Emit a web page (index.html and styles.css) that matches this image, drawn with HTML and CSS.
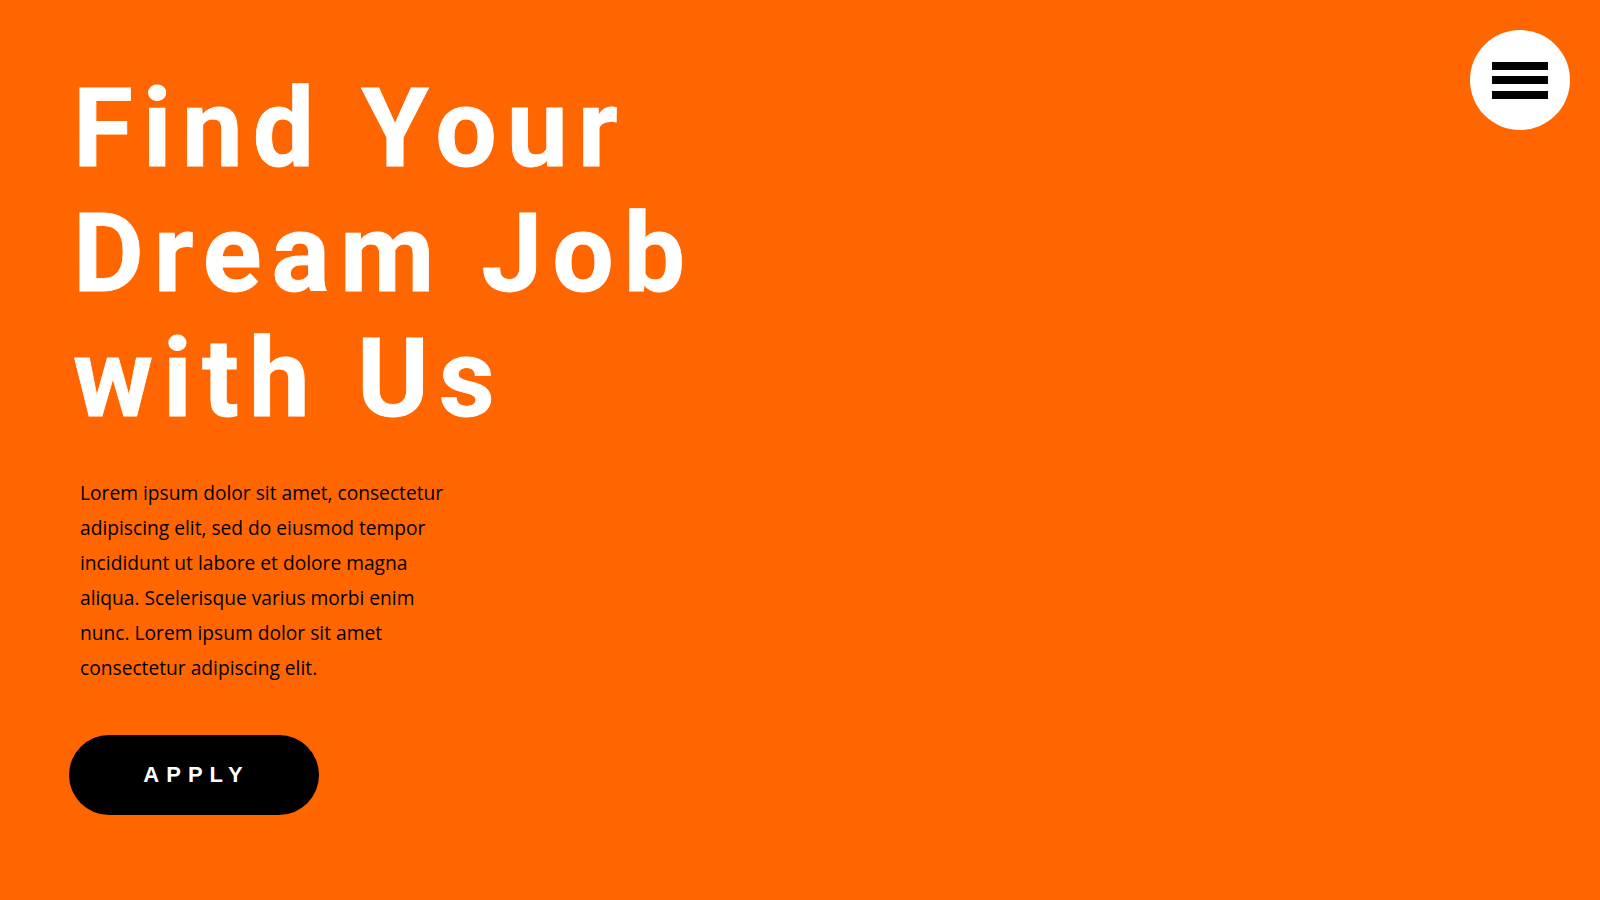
FILE: index.html
```html
<!DOCTYPE html>
<html lang="en">
<head>
<meta charset="utf-8">
<title>Find Your Dream Job</title>
<link rel="stylesheet" href="styles.css">
</head>
<body>
<main class="hero">
  <h1 class="hero-title">Find Your<br>Dream Job<br>with Us</h1>
  <p class="hero-text">Lorem ipsum dolor sit amet, consectetur adipiscing elit, sed do eiusmod tempor incididunt ut labore et dolore magna aliqua. Scelerisque varius morbi enim nunc. Lorem ipsum dolor sit amet consectetur adipiscing elit.</p>
  <a class="apply-btn" href="#">APPLY</a>
</main>
<button class="menu-btn" aria-label="Menu">
  <span class="menu-bar"></span>
  <span class="menu-bar"></span>
  <span class="menu-bar"></span>
</button>
</body>
</html>
```
FILE: styles.css
```css
html, body {
  margin: 0;
  padding: 0;
  height: 100%;
}
body {
  background: #ff6600;
  font-family: "Open Sans", sans-serif;
  overflow: hidden;
}
.hero {
  display: flex;
  flex-direction: column;
  align-items: flex-start;
  padding: 67px 0 0 68px;
}
.hero-title {
  margin: 0 0 0 5px;
  font-family: "Roboto", sans-serif;
  font-weight: 700;
  font-size: 109px;
  line-height: 125px;
  letter-spacing: 10px;
  color: #ffffff;
  -webkit-text-stroke: 0.8px #ffffff;
}
.hero-text {
  margin: 33px 0 0 12px;
  width: 380px;
  font-size: 19.2px;
  line-height: 35px;
  color: #000000;
}
.apply-btn {
  margin: 50px 0 0 1px;
  display: flex;
  align-items: center;
  justify-content: center;
  width: 250px;
  height: 80px;
  border-radius: 40px;
  background: #000000;
  color: #ffffff;
  text-decoration: none;
  font-family: "Liberation Sans", sans-serif;
  font-weight: 700;
  font-size: 22px;
  letter-spacing: 7px;
  padding-left: 5px;
  box-sizing: border-box;
}
.menu-btn {
  position: absolute;
  top: 30px;
  right: 30px;
  width: 100px;
  height: 100px;
  border-radius: 50%;
  border: none;
  background: #ffffff;
  display: flex;
  flex-direction: column;
  align-items: center;
  justify-content: center;
  gap: 6.5px;
  padding: 0;
  cursor: pointer;
}
.menu-bar {
  display: block;
  width: 56px;
  height: 8px;
  background: #000000;
}
```
